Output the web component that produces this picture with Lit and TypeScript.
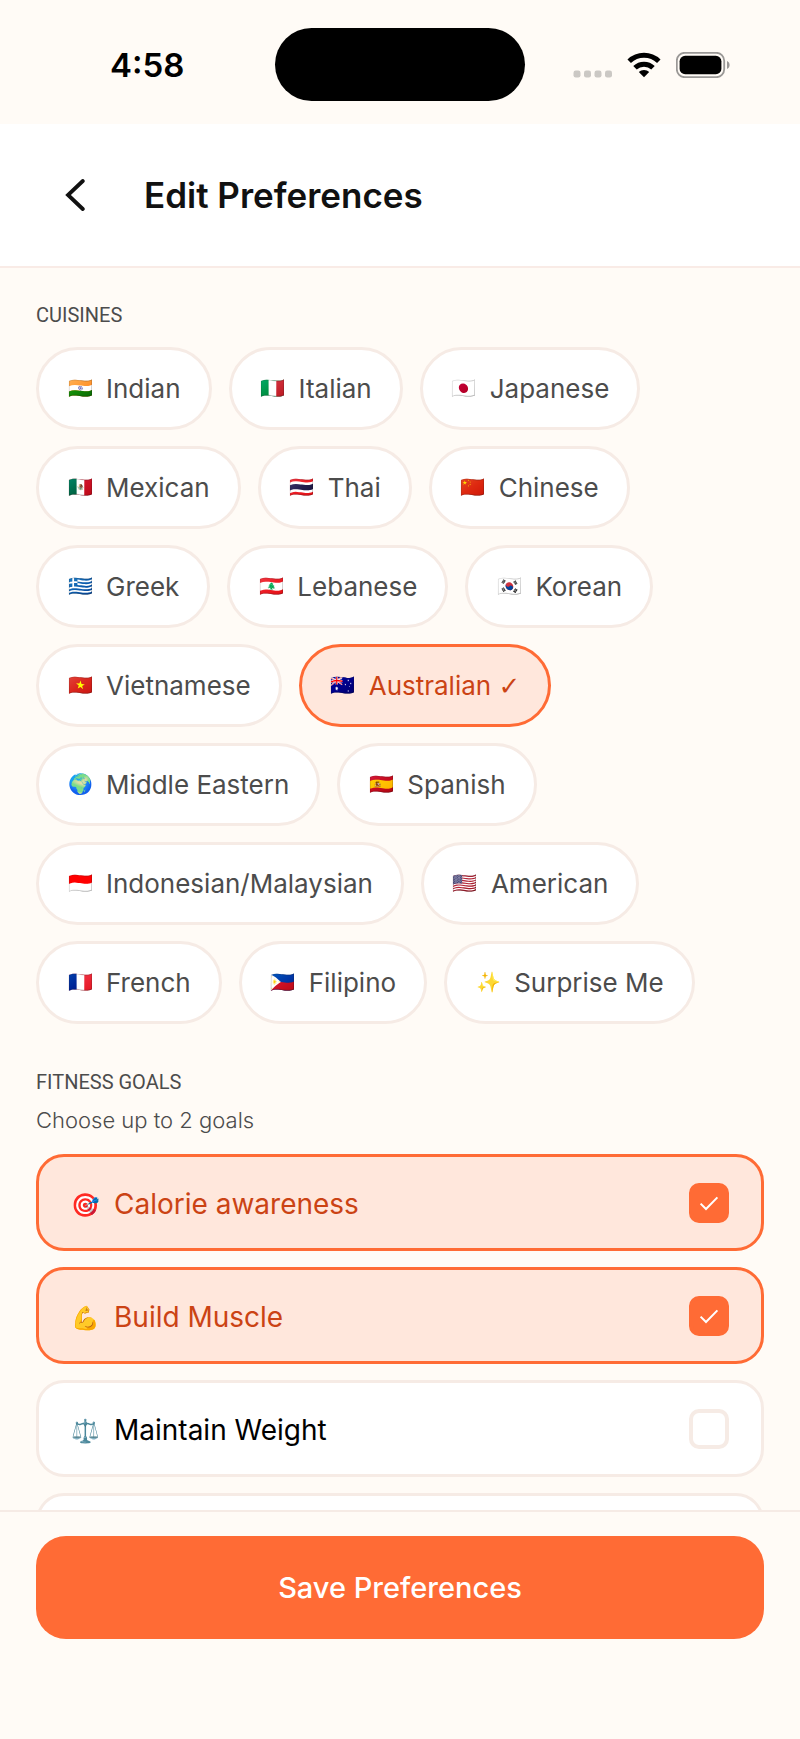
import { LitElement, html, css, svg } from "lit";
import { customElement, state } from "lit/decorators.js";
import { classMap } from "lit/directives/class-map.js";

interface Cuisine {
  flag: string;
  name: string;
}

interface Goal {
  icon: string;
  name: string;
}

const CUISINES: Cuisine[] = [
  { flag: "🇮🇳", name: "Indian" },
  { flag: "🇮🇹", name: "Italian" },
  { flag: "🇯🇵", name: "Japanese" },
  { flag: "🇲🇽", name: "Mexican" },
  { flag: "🇹🇭", name: "Thai" },
  { flag: "🇨🇳", name: "Chinese" },
  { flag: "🇬🇷", name: "Greek" },
  { flag: "🇱🇧", name: "Lebanese" },
  { flag: "🇰🇷", name: "Korean" },
  { flag: "🇻🇳", name: "Vietnamese" },
  { flag: "🇦🇺", name: "Australian" },
  { flag: "🌍", name: "Middle Eastern" },
  { flag: "🇪🇸", name: "Spanish" },
  { flag: "🇮🇩", name: "Indonesian/Malaysian" },
  { flag: "🇺🇸", name: "American" },
  { flag: "🇫🇷", name: "French" },
  { flag: "🇵🇭", name: "Filipino" },
  { flag: "✨", name: "Surprise Me" },
];

const GOALS: Goal[] = [
  { icon: "🎯", name: "Calorie awareness" },
  { icon: "💪", name: "Build Muscle" },
  { icon: "⚖️", name: "Maintain Weight" },
  { icon: "", name: "" },
];

const MAX_GOALS = 2;

@customElement("status-bar")
class StatusBar extends LitElement {
  static styles = css`
    :host {
      display: grid;
      grid-template-columns: 1fr 250px 1fr;
      align-items: center;
      padding: 28px 0 23px;
    }
    .time {
      padding-left: 110px;
      font-size: 33px;
      line-height: 40px;
      font-weight: 600;
      color: #000;
    }
    .island {
      height: 73px;
      border-radius: 37px;
      background: #000;
    }
    .signals {
      display: flex;
      justify-content: flex-end;
      gap: 15px;
      padding-right: 70px;
    }
    svg {
      display: block;
    }
  `;

  render() {
    return html`
      <div class="time">4:58</div>
      <div class="island"></div>
      <div class="signals">
        <svg width="39" height="26" viewBox="0 0 39 26" fill="#cbc8c4" aria-hidden="true">
          ${[0.5, 11, 21.5, 32].map(
            (x) => svg`<rect x=${x} y="18.5" width="7" height="7" rx="2.2" />`
          )}
        </svg>
        <svg width="34" height="26" viewBox="0 0 34 26" aria-hidden="true">
          <g fill="none" stroke="#000" stroke-width="5">
            <path d="M2.2 9.2 C10.5 1.2 23.5 1.2 31.8 9.2" />
            <path d="M8 15.8 C13 11 21 11 26 15.8" />
          </g>
          <path d="M17 25.2 L11.8 20 C14.5 17.3 19.5 17.3 22.2 20 Z" />
        </svg>
        <svg width="54" height="26" viewBox="0 0 54 26" aria-hidden="true">
          <rect x="0.8" y="0.8" width="47.4" height="24.4" rx="8" fill="none" stroke="#9a9896" stroke-width="1.8" />
          <rect x="3.6" y="3.8" width="41.8" height="18.4" rx="5.5" />
          <path d="M51 9 C54.4 10.2 54.4 15.8 51 17 Z" fill="#9a9896" />
        </svg>
      </div>
    `;
  }
}

@customElement("app-root")
class AppRoot extends LitElement {
  @state() private cuisines = new Set(["Australian"]);
  @state() private goals = new Set(["Calorie awareness", "Build Muscle"]);

  static styles = css`
    :host {
      --accent: #ff6b35;
      --accent-text: #cb4314;
      --tint: #ffe7dc;
      --line: #f6ebe5;
      --page: #fffbf6;
      display: flex;
      flex-direction: column;
      height: 100vh;
      background: var(--page);
      font-family: Inter, "Liberation Sans", sans-serif;
      color: #4c4c4c;
    }
    * {
      box-sizing: border-box;
    }
    button {
      margin: 0;
      border: 0;
      padding: 0;
      background: none;
      font: inherit;
      color: inherit;
      cursor: pointer;
    }
    header {
      display: flex;
      align-items: center;
      gap: 46px;
      padding: 49px 52px 50px;
      border-bottom: 2px solid #f9ebe6;
      background: #fff;
    }
    .back {
      display: grid;
      place-items: center;
      width: 46px;
      height: 43px;
    }
    h1 {
      margin: 0;
      font-size: 35px;
      line-height: 42px;
      font-weight: 600;
      color: #111;
    }
    main {
      flex: 1;
      min-height: 0;
      overflow-y: auto;
      scrollbar-width: none;
      padding: 35px 36px;
    }
    h2 {
      margin: 0;
      font: 400 20px/24px Roboto, sans-serif;
      text-transform: uppercase;
    }
    .chips {
      display: flex;
      flex-wrap: wrap;
      gap: 16px 17px;
      margin: 20px 0 46px;
    }
    .chip {
      display: flex;
      align-items: center;
      gap: 13px;
      border: 3px solid var(--line);
      border-radius: 42px;
      padding: 22px 28px;
      background: #fff;
      font-size: 26px;
      line-height: 33px;
    }
    .chip.on {
      border-color: var(--accent);
      background: var(--tint);
      color: var(--accent-text);
    }
    .flag {
      display: flex;
      justify-content: center;
      width: 26px;
      font-size: 20px;
    }
    .tick {
      font-family: "DejaVu Sans", sans-serif;
      line-height: 1;
    }
    .hint {
      margin: 12px 0 20px;
      font-size: 22px;
      line-height: 28px;
      font-weight: 300;
    }
    .goals {
      display: grid;
      gap: 16px;
    }
    .goal {
      display: flex;
      align-items: center;
      gap: 14px;
      min-height: 97px;
      border: 3px solid var(--line);
      border-radius: 28px;
      padding: 0 32px;
      background: #fff;
      font-size: 28px;
      line-height: 34px;
      color: #000;
      cursor: pointer;
    }
    .goal.on {
      border-color: var(--accent);
      background: var(--tint);
      color: var(--accent-text);
    }
    .icon {
      display: flex;
      justify-content: center;
      width: 29px;
      padding-top: 4px;
      font-size: 23px;
    }
    .name {
      flex: 1;
      padding-top: 3px;
    }
    .box {
      display: grid;
      place-items: center;
    }
    .box > * {
      grid-area: 1 / 1;
    }
    .box svg {
      pointer-events: none;
    }
    .box input {
      appearance: none;
      width: 40px;
      height: 40px;
      margin: 0;
      border: 4px solid var(--line);
      border-radius: 10px;
      background: #fff;
    }
    .box input:checked {
      border-color: var(--accent);
      background: var(--accent);
    }
    footer {
      border-top: 2px solid var(--line);
      padding: 24px 36px 100px;
    }
    .save {
      width: 100%;
      border-radius: 30px;
      padding: 33px;
      background: var(--accent);
      color: #fff;
      font-size: 29px;
      line-height: 37px;
      font-weight: 500;
    }
  `;

  private toggleCuisine(name: string) {
    const next = new Set(this.cuisines);
    next.has(name) ? next.delete(name) : next.add(name);
    this.cuisines = next;
  }

  private toggleGoal(name: string, input: HTMLInputElement) {
    const next = new Set(this.goals);
    if (next.has(name)) next.delete(name);
    else if (next.size < MAX_GOALS) next.add(name);
    input.checked = next.has(name);
    this.goals = next;
  }

  private chip({ flag, name }: Cuisine) {
    const on = this.cuisines.has(name);
    return html`
      <button
        type="button"
        class=${classMap({ chip: true, on })}
        aria-pressed=${on ? "true" : "false"}
        @click=${() => this.toggleCuisine(name)}
      >
        <span class="flag" aria-hidden="true">${flag}</span>
        <span>${name}${on ? html` <span class="tick">✓</span>` : ""}</span>
      </button>
    `;
  }

  private goal({ icon, name }: Goal) {
    const on = this.goals.has(name);
    return html`
      <label class=${classMap({ goal: true, on })}>
        <span class="icon" aria-hidden="true">${icon}</span>
        <span class="name">${name}</span>
        <span class="box">
          <input
            type="checkbox"
            .checked=${on}
            @change=${(e: Event) => this.toggleGoal(name, e.target as HTMLInputElement)}
          />
          ${on
            ? html`<svg width="20" height="16" viewBox="0 0 20 16" fill="none" stroke="#fff" stroke-width="2" aria-hidden="true">
                <path d="M1.6 8.6 L7 14 L18.4 2.4" />
              </svg>`
            : ""}
        </span>
      </label>
    `;
  }

  render() {
    return html`
      <status-bar></status-bar>
      <header>
        <button type="button" class="back" aria-label="Back">
          <svg width="20" height="32" viewBox="0 0 20 32" fill="none" stroke="#111" stroke-width="3.8" stroke-linecap="round" aria-hidden="true">
            <path d="M17.8 2 L3 16 L17.8 30" stroke-linejoin="miter" />
          </svg>
        </button>
        <h1>Edit Preferences</h1>
      </header>
      <main>
        <h2>Cuisines</h2>
        <div class="chips">${CUISINES.map((c) => this.chip(c))}</div>
        <h2>Fitness Goals</h2>
        <p class="hint">Choose up to 2 goals</p>
        <div class="goals">${GOALS.map((g) => this.goal(g))}</div>
      </main>
      <footer>
        <button type="button" class="save">Save Preferences</button>
      </footer>
    `;
  }
}
